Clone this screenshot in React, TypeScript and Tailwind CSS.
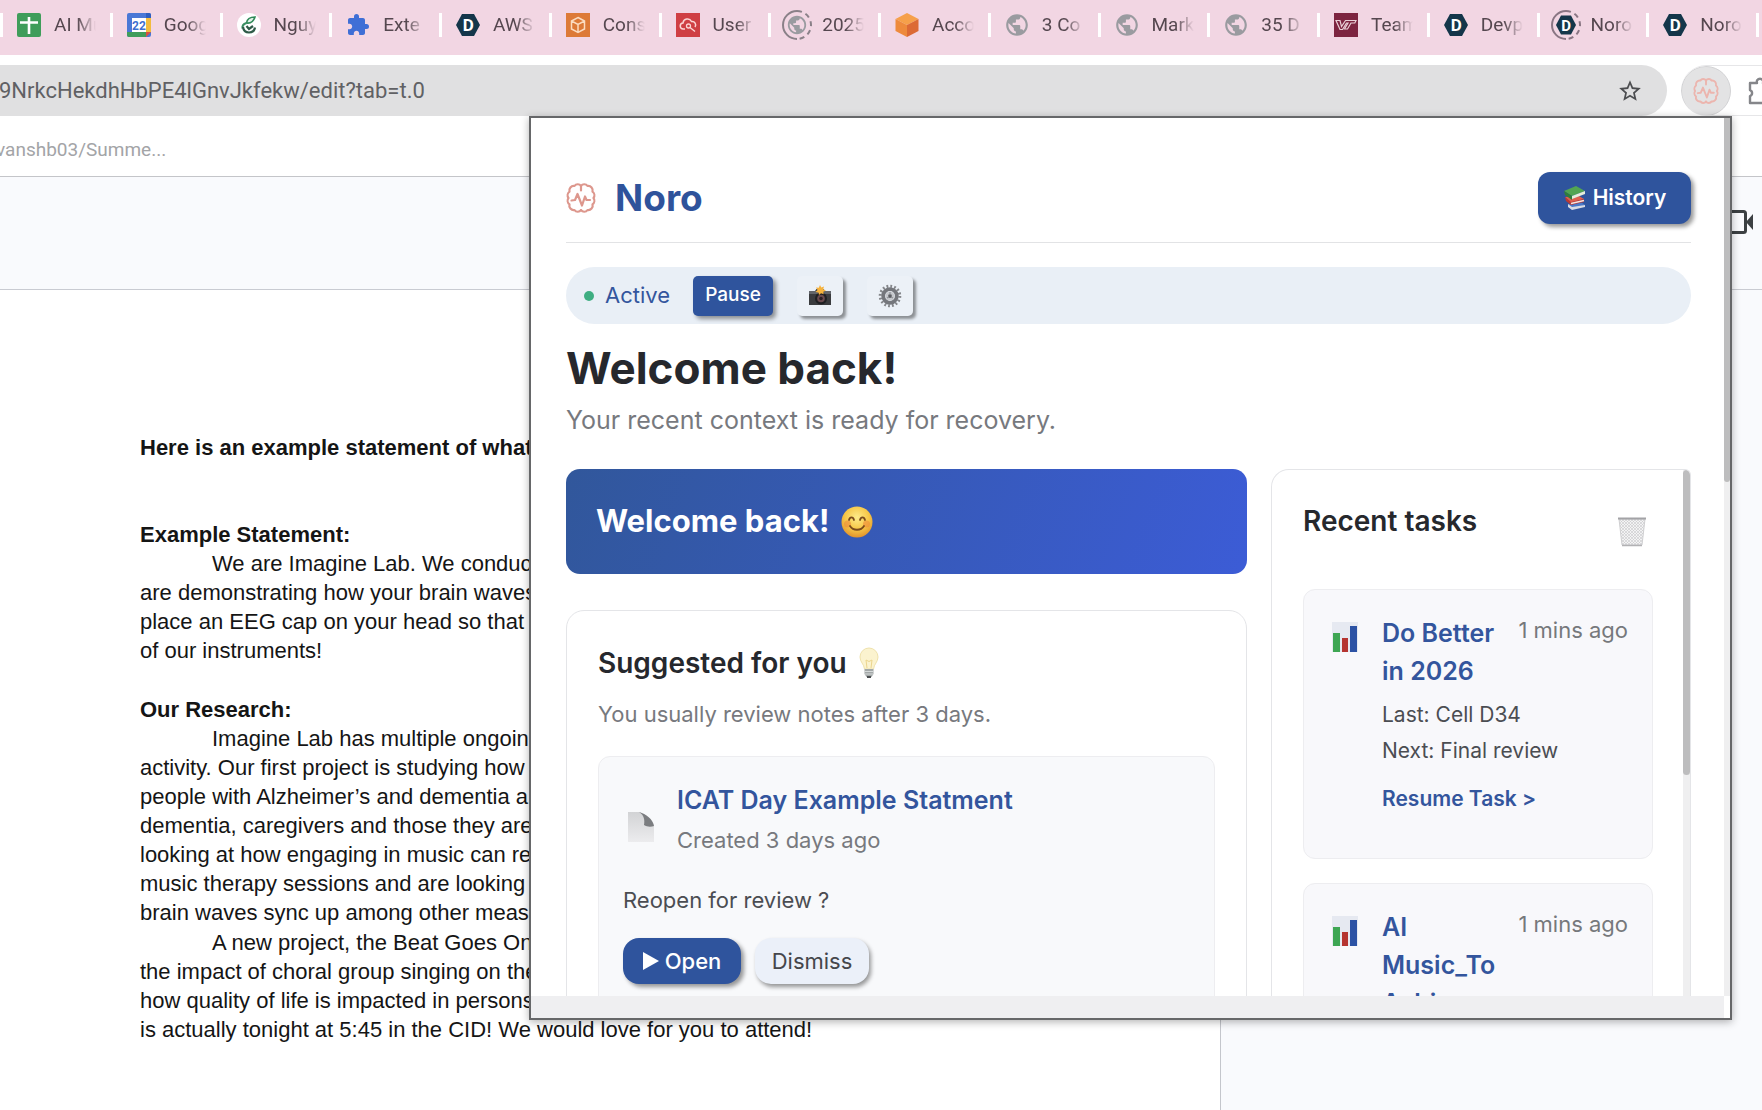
import { ReactNode } from "react";
import { MdExtension, MdPublic, MdStarBorder } from "react-icons/md";

/* ---------- tab icons ---------- */

const SheetsIcon = () => (
  <svg viewBox="0 0 24 24" className="size-6">
    <rect width="24" height="24" rx="2" fill="#3f9d5a" />
    <path d="M3 9.5h18M12 4v17" stroke="#fff" strokeWidth="2.6" />
  </svg>
);

const CalendarIcon = () => (
  <svg viewBox="0 0 24 24" className="size-6">
    <rect width="24" height="24" rx="2" fill="#4a78d6" />
    <path d="M19 5h5v14h-5z" fill="#f2bb3d" />
    <path d="M0 19h19v5H2a2 2 0 0 1-2-2z" fill="#3f9d5a" />
    <path d="M19 19h5l-5 5z" fill="#d9503f" />
    <path d="M19 0h3a2 2 0 0 1 2 2v3h-5z" fill="#2f5fc0" />
    <rect x="5" y="5" width="14" height="14" fill="#fff" />
    <text x="12" y="16.5" textAnchor="middle" fontSize="12" fontWeight="700" fill="#3f6fd0" fontFamily="Roboto">
      22
    </text>
  </svg>
);

const LeafIcon = () => (
  <svg viewBox="0 0 24 24" className="size-6">
    <circle cx="12" cy="12" r="12" fill="#fff" />
    <path d="M18 4c-5 0-8 2-8.5 6 3.5.5 7-1.5 8.5-6z" fill="#e4f2ea" stroke="#2f8a58" strokeWidth="1.6" />
    <path d="M9.5 10c-3 1-4.5 3-4 5.500" fill="none" stroke="#3b8f63" strokeWidth="2" />
    <path d="M6 14c.5 3.500 3 5.500 6 5.500 3.500 0 5.500-2 6-5M9.500 13l2.500 3 4-3" fill="none" stroke="#2f5b48" strokeWidth="2.2" />
  </svg>
);

const PuzzleIcon = () => <MdExtension className="size-6 text-[#3f6fd6]" />;

const DevpostIcon = () => (
  <svg viewBox="0 0 24 24" className="size-6">
    <path d="M6 1h12l6 11-6 11H6L0 12z" fill="#14364a" />
    <text x="12.3" y="18" textAnchor="middle" fontSize="17" fontWeight="700" fill="#fff" fontFamily="Roboto">
      D
    </text>
  </svg>
);

const DevpostLoadingIcon = () => (
  <svg viewBox="0 0 30 30" className="-mx-[3px] size-[30px]">
    <path d="M15 1a14 14 0 0 0 0 28" fill="none" stroke="#8a7684" strokeWidth="2" />
    <path d="M15 1a14 14 0 0 1 0 28" fill="none" stroke="#8a7684" strokeWidth="2" strokeDasharray="5 4" />
    <path d="M10 5.500h10l5 9.500-5 9.500H10L5 15z" fill="#14364a" />
    <text x="15.2" y="20.5" textAnchor="middle" fontSize="15" fontWeight="700" fill="#fff" fontFamily="Roboto">
      D
    </text>
  </svg>
);

const ConsoleIcon = () => (
  <svg viewBox="0 0 24 24" className="size-6">
    <rect width="24" height="24" fill="#dd7a37" />
    <path
      d="M12 4.500l6.500 3.500v8L12 19.500 5.500 16V8zM5.500 8L12 11.500 18.500 8M12 11.500v8"
      fill="none"
      stroke="#fbdcc0"
      strokeWidth="1.5"
    />
  </svg>
);

const UserIcon = () => (
  <svg viewBox="0 0 24 24" className="size-6">
    <rect width="24" height="24" fill="#cf3f44" />
    <path
      d="M9 16H7.500a3 3 0 0 1-.5-6 4.500 4.500 0 0 1 8.500-1.500A3.500 3.500 0 0 1 19 14"
      fill="none"
      stroke="#fbd5d5"
      strokeWidth="1.5"
    />
    <circle cx="12.5" cy="13" r="2" fill="none" stroke="#fbd5d5" strokeWidth="1.3" />
    <path d="M14 14.500l5 4" stroke="#fbd5d5" strokeWidth="1.5" />
  </svg>
);

const GlobeIcon = () => <MdPublic className="-mx-px size-[26px] text-[#9a9ba0]" />;

const GlobeLoadingIcon = () => (
  <span className="relative -mx-[3px] flex size-[30px] shrink-0 items-center justify-center">
    <svg viewBox="0 0 30 30" className="absolute inset-0">
      <path d="M15 1a14 14 0 0 0 0 28" fill="none" stroke="#8a8088" strokeWidth="2" />
      <path d="M15 1a14 14 0 0 1 0 28" fill="none" stroke="#8a8088" strokeWidth="2" strokeDasharray="5 4" />
    </svg>
    <MdPublic className="size-[22px] text-[#9a9ba0]" />
  </span>
);

const CubeIcon = () => (
  <svg viewBox="0 0 24 24" className="size-6">
    <path d="M12 0l11.500 6L12 12 .5 6z" fill="#f6a04a" />
    <path d="M.5 6L12 12v12L.5 18z" fill="#ee8a3c" />
    <path d="M23.500 6L12 12v12l11.500-6z" fill="#dc6a35" />
  </svg>
);

const VtIcon = () => (
  <svg viewBox="0 0 24 24" className="size-6">
    <rect width="24" height="24" fill="#7d2440" />
    <path d="M2 7.500h4l1.500 6 4-6h10.500l-1.200 2.500H17l-3.500 6h-3l3.500-6h-1.500L8.500 16.500H6z" fill="none" stroke="#e9cfd6" strokeWidth="1.2" />
  </svg>
);

/* ---------- popup icons ---------- */

const BrainIcon = ({ className }: { className: string }) => (
  <svg viewBox="0 0 30 30" className={className} fill="none" stroke="currentColor" strokeWidth="2.2" strokeLinejoin="round" strokeLinecap="round">
    <path d="M15 2.800A4 4 0 0 0 8.500 3 4.400 4.400 0 0 0 3.500 8.600a4.600 4.600 0 0 0-1 6.400 4.600 4.600 0 0 0 1 6.400A4.400 4.400 0 0 0 8.500 27a4 4 0 0 0 6.500.2" />
    <path d="M15 2.800A4 4 0 0 1 21.500 3a4.400 4.400 0 0 1 5 5.600 4.600 4.600 0 0 1 1 6.400 4.600 4.600 0 0 1-1 6.400 4.400 4.400 0 0 1-5 5.600 4 4 0 0 1-6.500.2" />
    <path d="M15 3v4.500M5.500 17.500L9 17l2.500-6 4.500 11.500 3-9 1.500 3.500H24" />
  </svg>
);

const ExtensionIcon = () => (
  <svg viewBox="0 0 28 28" className="size-7" fill="none" stroke="#85868a" strokeWidth="2.4" strokeLinejoin="round">
    <path d="M3 6h7a3.200 3.200 0 1 1 6 0h7v7a3 3 0 1 1 0 6v7H3v-7a3.200 3.200 0 0 0 0-6z" />
  </svg>
);

const BooksIcon = () => (
  <svg viewBox="0 0 24 26" className="h-[26px] w-6">
    <path d="M5 19l13-2 4 3-13 4z" fill="#4a78c8" />
    <path d="M5 19v3l4 3 13-3v-2l-13 2z" fill="#d8dbe4" />
    <path d="M2 12l14-1 5 3-13 4z" fill="#e0604f" />
    <path d="M2 12l1 4 5 4 13-3v-3l-13 3z" fill="#b93a35" />
    <path d="M8 18.500l13-3" stroke="#f5e6e0" strokeWidth="1.5" />
    <path d="M1 6l12-5 9 5L9 11z" fill="#52a552" />
    <path d="M1 6l8 5v4L2 10z" fill="#2f7d3c" />
    <path d="M9 11l13-5v3L9 14z" fill="#e6eedc" />
  </svg>
);

const CameraIcon = () => (
  <svg viewBox="0 0 24 22" className="h-[22px] w-6">
    <path d="M1 6h6l1.500-2h7L17 6h6v14H1z" fill="#3a3b3e" />
    <path d="M1 6h22v3H1z" fill="#62656a" />
    <circle cx="13" cy="13.5" r="6" fill="#1f2023" />
    <circle cx="13" cy="13.5" r="3.8" fill="#6b4b4f" />
    <circle cx="13" cy="13.5" r="1.8" fill="#2b2024" />
    <path d="M12 0l1.300 2.500L16 1.500l-.8 2.800 2.800 1.200-2.800 1.200.5 2.500-2.700-1L11 10l-.5-2.600L7.500 7l2-2-1.500-2.500 2.800.3z" fill="#f6b23c" />
  </svg>
);

const GearIcon = () => (
  <svg viewBox="0 0 24 24" className="size-6">
    <circle cx="12" cy="12" r="9.800" fill="none" stroke="#85878b" strokeWidth="3" strokeDasharray="1.800 2.050" />
    <circle cx="12" cy="12" r="6.800" fill="none" stroke="#75777c" strokeWidth="3.8" />
    <circle cx="12" cy="12" r="4.5" fill="#c6c8cc" />
    <circle cx="12" cy="12" r="1.9" fill="#5c5e63" />
    <path d="M12 8v3M9 14l2-1M15 14l-2-1" stroke="#8d9095" strokeWidth="1.2" />
  </svg>
);

const SmileIcon = () => (
  <svg viewBox="0 0 32 32" className="size-8">
    <defs>
      <radialGradient id="smile" cx="50%" cy="35%" r="65%">
        <stop offset="0" stopColor="#fdeb8a" />
        <stop offset="0.6" stopColor="#f6c646" />
        <stop offset="1" stopColor="#e2932c" />
      </radialGradient>
    </defs>
    <circle cx="16" cy="16" r="15.5" fill="url(#smile)" />
    <circle cx="6.5" cy="18" r="3.5" fill="#ee8a3a" opacity="0.6" />
    <circle cx="25.5" cy="18" r="3.5" fill="#ee8a3a" opacity="0.6" />
    <path d="M8 14c1-3.500 4-3.500 5 0M19 14c1-3.500 4-3.500 5 0M9 20c3 5 11 5 14 0" fill="none" stroke="#7a4a1c" strokeWidth="1.8" strokeLinecap="round" />
  </svg>
);

const BulbIcon = () => (
  <svg viewBox="0 0 20 32" className="h-8 w-5">
    <path d="M10 1a9 9 0 0 0-9 9c0 5 4 7 4.500 12h9C15 17 19 15 19 10a9 9 0 0 0-9-9z" fill="#fbf3cf" stroke="#efe2ac" />
    <path d="M8 21L7 13l3 1.500 3-1.500-1 8" fill="none" stroke="#ecd58c" />
    <path d="M5.500 22h9v5l-2 3h-5l-2-3z" fill="#a3a8a8" />
    <path d="M5.500 24.500h9M6 27h8" stroke="#d6dada" />
    <path d="M8 29h4v2H8z" fill="#4b4e50" />
  </svg>
);

const TrashIcon = () => (
  <svg viewBox="0 0 30 30" className="size-[30px]">
    <defs>
      <pattern id="mesh" width="3" height="3" patternUnits="userSpaceOnUse">
        <path d="M0 0l3 3M3 0L0 3" stroke="#c8c8ca" strokeWidth="0.6" />
      </pattern>
    </defs>
    <path d="M2 2h26l-3 26H5z" fill="#f3f3f4" />
    <path d="M2 2h26l-3 26H5z" fill="url(#mesh)" stroke="#cfcfd1" />
    <path d="M1 1.500h28" stroke="#a3a3a6" strokeWidth="2" />
    <path d="M5 28.500h20" stroke="#b2b2b4" strokeWidth="1.5" />
  </svg>
);

const ChartIcon = () => (
  <svg viewBox="0 0 26 30" className="h-[30px] w-[26px] shrink-0">
    <rect width="26" height="30" fill="#e6e9f1" />
    <rect x="1" y="11" width="7" height="19" fill="#3ea653" />
    <rect x="10" y="16" width="6" height="14" fill="#b53430" />
    <rect x="18" y="4" width="7" height="26" fill="#2c52a4" />
  </svg>
);

const FileIcon = () => (
  <svg viewBox="0 0 26 30" className="h-[30px] w-[26px]">
    <defs>
      <linearGradient id="page" x1="0" x2="0" y1="0" y2="1">
        <stop offset="0" stopColor="#d2d3d5" />
        <stop offset="1" stopColor="#ececee" />
      </linearGradient>
    </defs>
    <path d="M0 0h12c5 2 10 7 14 13v17H0z" fill="url(#page)" />
    <path d="M11 0c5 3 6 8 5 13 3 2 7 2 10 1C25 7 18 2 11 0z" fill="#7b7d80" />
  </svg>
);

const MeetIcon = () => (
  <svg viewBox="0 0 30 24" className="h-6 w-[30px]">
    <rect x="1.5" y="1.5" width="20" height="21" rx="2" fill="none" stroke="#3c4043" strokeWidth="3" />
    <path d="M22 12l7-8v16z" fill="#3c4043" />
  </svg>
);

/* ---------- page data ---------- */

const tabs: { title: string; icon: ReactNode }[] = [
  { title: "AI Mu", icon: <SheetsIcon /> },
  { title: "Goog", icon: <CalendarIcon /> },
  { title: "Nguy", icon: <LeafIcon /> },
  { title: "Exte", icon: <PuzzleIcon /> },
  { title: "AWS", icon: <DevpostIcon /> },
  { title: "Cons", icon: <ConsoleIcon /> },
  { title: "User", icon: <UserIcon /> },
  { title: "2025", icon: <GlobeLoadingIcon /> },
  { title: "Acco", icon: <CubeIcon /> },
  { title: "3 Co", icon: <GlobeIcon /> },
  { title: "Mark", icon: <GlobeIcon /> },
  { title: "35 D", icon: <GlobeIcon /> },
  { title: "Team", icon: <VtIcon /> },
  { title: "Devp", icon: <DevpostIcon /> },
  { title: "Noro", icon: <DevpostLoadingIcon /> },
  { title: "Noro", icon: <DevpostIcon /> },
];

const statement = [
  "We are Imagine Lab. We conduc",
  "are demonstrating how your brain waves",
  "place an EEG cap on your head so that",
  "of our instruments!",
];

const research = [
  "Imagine Lab has multiple ongoin",
  "activity. Our first project is studying how",
  "people with Alzheimer’s and dementia a",
  "dementia, caregivers and those they are",
  "looking at how engaging in music can re",
  "music therapy sessions and are looking",
  "brain waves sync up among other meas",
];

const newProject = [
  "A new project, the Beat Goes On",
  "the impact of choral group singing on the",
  "how quality of life is impacted in persons",
  "is actually tonight at 5:45 in the CID! We would love for you to attend!",
];

const tasks = [
  { title: "Do Better in 2026", time: "1 mins ago", last: "Cell D34", next: "Final review" },
  { title: "AI Music_To Achieve", time: "1 mins ago", last: "Cell A1", next: "Final review" },
];

const Paragraph = ({ lines }: { lines: string[] }) => (
  <p className="pb-px">
    {lines.map((line) => (
      <span key={line} className="block whitespace-nowrap first:indent-[72px]">
        {line}
      </span>
    ))}
  </p>
);

const BrowserChrome = () => (
  <>
    <nav className="flex h-[55px] items-start overflow-hidden bg-[#f2d6e3] pr-[6px] pt-[13px]">
      {tabs.map((tab, i) => (
        <a key={i} href="#" className="flex h-6 min-w-0 flex-1 items-center border-l-[3px] border-white pl-[14px]">
          {tab.icon}
          <span className="ml-[13px] w-[42px] overflow-hidden whitespace-nowrap text-[19px] leading-6 text-[#55474f] [mask-image:linear-gradient(to_right,black_55%,transparent)]">
            {tab.title}
          </span>
        </a>
      ))}
      <span className="-mr-[3px] h-6 w-[3px] bg-white" />
    </nav>
    <div className="flex gap-[14px] pt-[10px]">
      <div className="flex h-[51px] flex-1 items-center rounded-r-full bg-[#e0e0e1] pr-6">
        <input
          aria-label="Address"
          readOnly
          value="9NrkcHekdhHbPE4lGnvJkfekw/edit?tab=t.0"
          className="-ml-px flex-1 text-[22px] text-[#606164] outline-none"
        />
        <button aria-label="Bookmark this tab">
          <MdStarBorder className="size-[26px] text-[#4c4d50]" />
        </button>
      </div>
      <div className="flex h-[51px] w-[81px] items-center overflow-hidden rounded-l-full border-y border-[#e6e6e8]">
        <button aria-label="Noro" className="flex size-[50px] shrink-0 items-center justify-center rounded-full border border-[#d2d2d4] bg-[#e3e3e4]">
          <BrainIcon className="size-[26px] text-[#ecb5ae]" />
        </button>
        <button aria-label="Extensions" className="ml-4 shrink-0">
          <ExtensionIcon />
        </button>
      </div>
    </div>
    <div className="flex h-[61px] items-center border-b border-[#c4c5c9] pt-2">
      <a href="#" className="-ml-1 text-[19px] text-[#a3a4a7]">
        vanshb03/Summe...
      </a>
    </div>
  </>
);

const Document = () => (
  <>
    <div className="flex h-[113px] justify-end border-b border-[#c9cbd2] bg-[#f9fafd] pr-2 pt-[33px]">
      <button aria-label="Join a call" className="h-6">
        <MeetIcon />
      </button>
    </div>
    <div className="flex flex-1 bg-[#f9fafd]">
      <article className="flex-1 border-r border-[#c4c6cc] bg-white pl-[140px] pt-[143px] font-['Liberation_Sans',Arial,sans-serif] text-[22px] leading-[29px] text-[#151515]">
        <h2 className="mb-[58px] font-bold">Here is an example statement of what</h2>
        <h3 className="font-bold">Example Statement:</h3>
        <Paragraph lines={statement} />
        <h3 className="mt-[29px] font-bold">Our Research:</h3>
        <Paragraph lines={research} />
        <Paragraph lines={newProject} />
      </article>
      <aside className="w-[541px]" />
    </div>
  </>
);

const TaskCard = ({ task }: { task: (typeof tasks)[number] }) => (
  <li className="flex gap-6 rounded-xl border border-[#ededf0] bg-[#f8f8fb] pb-[41px] pl-7 pr-6 pt-6">
    <div className="pt-2">
      <ChartIcon />
    </div>
    <div className="min-w-0 flex-1">
      <div className="flex justify-between gap-2">
        <h4 className="w-[124px] text-[25px] font-semibold leading-[38px] text-[#33559d]">{task.title}</h4>
        <span className="whitespace-nowrap text-[22px] leading-8 text-[#76787c]">{task.time}</span>
      </div>
      <p className="mt-[7px] text-[21px] leading-9 text-[#4b4d52]">Last: {task.last}</p>
      <p className="text-[21px] leading-9 text-[#4b4d52]">Next: {task.next}</p>
      <a href="#" className="mt-3 block text-[21px] font-semibold leading-9 text-[#33559d]">
        Resume Task &gt;
      </a>
    </div>
  </li>
);

const Popup = () => (
  <section className="absolute left-[529px] right-[30px] top-[116px] flex h-[904px] flex-col overflow-hidden border-2 border-[#666769] bg-white font-['Inter',sans-serif] shadow-[0_2px_8px_rgba(0,0,0,0.3)]">
    <div className="flex min-h-0 flex-1">
      <div className="flex min-w-0 flex-1 flex-col overflow-hidden pl-[35px] pr-[33px] pt-[54px]">
        <header className="flex shrink-0 items-start justify-between border-b border-[#e2e3e5] pb-[18px]">
          <div className="flex h-[52px] items-center gap-[19px]">
            <BrainIcon className="size-[30px] text-[#dd978d]" />
            <h1 className="text-[37px] font-bold leading-[52px] text-[#2f539b]">Noro</h1>
          </div>
          <button className="flex h-[52px] w-[153px] items-center justify-center gap-[6px] rounded-xl bg-[#2f549d] text-[21px] font-semibold text-white shadow-[3px_3px_4px_rgba(0,0,0,0.4)]">
            <BooksIcon />
            History
          </button>
        </header>

        <div className="mt-6 flex h-[57px] shrink-0 items-center gap-6 rounded-full bg-[#e9eff6] pl-[18px]">
          <div className="flex w-[85px] items-center gap-[11px]">
            <span className="size-[10px] shrink-0 rounded-full bg-[#3fae82]" />
            <span className="text-[22px] text-[#33559d]">Active</span>
          </div>
          <button className="h-10 w-20 rounded-[5px] bg-[#2f549d] text-[19px] font-medium text-white shadow-[3px_3px_4px_rgba(0,0,0,0.4)]">
            Pause
          </button>
          <button aria-label="Capture" className="flex h-10 w-[46px] items-center justify-center rounded-[5px] bg-[#ecf1f7] shadow-[3px_3px_3px_rgba(0,0,0,0.4)]">
            <CameraIcon />
          </button>
          <button aria-label="Settings" className="flex h-10 w-[46px] items-center justify-center rounded-[5px] bg-[#ecf1f7] shadow-[3px_3px_3px_rgba(0,0,0,0.4)]">
            <GearIcon />
          </button>
        </div>

        <h2 className="mt-4 text-[44px] font-bold leading-[56px] text-[#26282d]">Welcome back!</h2>
        <p className="mt-[6px] text-[25px] leading-9 text-[#77797e]">Your recent context is ready for recovery.</p>

        <div className="mt-[31px] grid min-h-0 flex-1 grid-cols-[minmax(0,1fr)_420px] gap-6">
          <div>
            <div className="flex h-[105px] items-center gap-3 rounded-[14px] bg-linear-[110deg] from-[#31579b] to-[#3c5cd6] pl-[30px]">
              <span className="text-[31px] font-bold text-white">Welcome back!</span>
              <SmileIcon />
            </div>
            <div className="mt-9 rounded-[18px] border border-[#e4e5e8] px-[31px] pb-8 pt-8">
              <h3 className="flex h-10 items-center gap-3 text-[28px] font-semibold text-[#26282d]">
                Suggested for you
                <BulbIcon />
              </h3>
              <p className="mt-[15px] text-[22px] leading-8 text-[#77797e]">You usually review notes after 3 days.</p>
              <div className="mt-[26px] rounded-xl border border-[#ededf0] bg-[#f8f9fb] px-6 pb-6 pt-[23px]">
                <div className="flex gap-[23px] pl-[5px]">
                  <div className="pt-8">
                    <FileIcon />
                  </div>
                  <div>
                    <h4 className="text-[25px] font-semibold leading-10 text-[#33559d]">ICAT Day Example Statment</h4>
                    <p className="text-[22px] leading-10 text-[#77797e]">Created 3 days ago</p>
                  </div>
                </div>
                <p className="mt-5 text-[22px] leading-10 text-[#4b4d52]">Reopen for review ?</p>
                <div className="mt-[18px] flex gap-[14px]">
                  <button className="flex h-[46px] w-[118px] items-center justify-center gap-[6px] rounded-2xl bg-[#2f549d] text-[22px] font-medium text-white shadow-[3px_3px_4px_rgba(0,0,0,0.4)]">
                    <svg viewBox="0 0 16 18" className="h-[18px] w-4">
                      <path d="M0 0l16 9-16 9z" fill="#fff" />
                    </svg>
                    Open
                  </button>
                  <button className="h-[46px] w-[114px] rounded-2xl bg-[#ebf0f9] text-[22px] text-[#44464b] shadow-[2px_3px_4px_rgba(0,0,0,0.4)]">
                    Dismiss
                  </button>
                </div>
              </div>
            </div>
          </div>

          <div className="flex overflow-hidden rounded-tl-[18px] rounded-tr-md border border-b-0 border-[#e4e5e8]">
            <div className="flex-1 pl-[31px] pr-[30px]">
              <div className="flex h-[119px] items-start justify-between pr-[6px]">
                <h3 className="pt-[31px] text-[28px] font-semibold leading-10 text-[#26282d]">Recent tasks</h3>
                <button aria-label="Clear tasks" className="pt-[47px]">
                  <TrashIcon />
                </button>
              </div>
              <ul className="flex flex-col gap-6">
                {tasks.map((task) => (
                  <TaskCard key={task.title} task={task} />
                ))}
              </ul>
            </div>
            <div className="w-[7px] shrink-0 bg-[#efeff0]">
              <div className="h-[305px] rounded-full bg-[#bdbdbe]" />
            </div>
          </div>
        </div>
      </div>
      <div className="w-[6px] shrink-0 bg-[#efeff0]">
        <div className="h-[364px] rounded-b-full bg-[#bdbdbe]" />
      </div>
    </div>
    <div className="mr-[6px] h-[22px] shrink-0 bg-[#efeff1]" />
  </section>
);

const App = () => (
  <div className="relative flex h-screen min-h-[1080px] w-full flex-col overflow-hidden bg-white font-['Roboto',sans-serif]">
    <BrowserChrome />
    <Document />
    <Popup />
  </div>
);

export default App;
